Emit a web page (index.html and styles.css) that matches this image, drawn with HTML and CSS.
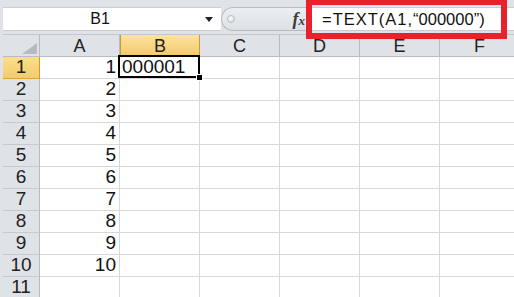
FILE: index.html
```html
<!DOCTYPE html>
<html lang="ja">
<head>
    <meta charset="UTF-8">
    <title>TEXT関数</title>
    <link rel="stylesheet" href="styles.css">
</head>
<body>

    <div class="window">
        <!-- 数式バー -->
        <div class="formula-bar">
            <div class="name-box">
                <span class="cell-ref">B1</span>
                <span class="drop"><span class="drop-arrow"></span></span>
            </div>
            <div class="splitter">
                <span class="knob"></span>
                <span class="fx">f<i>x</i></span>
            </div>
            <div class="formula"><span class="fn">=TEXT(A1,</span><span class="q">“</span>000000<span class="q">”</span><span class="fn">)</span></div>
            <div class="callout"></div>
        </div>

        <!-- シート -->
        <div class="sheet">
            <div class="cell corner">
                <svg width="15" height="11" viewBox="0 0 15 11"><polygon points="15,0 15,11 0,11" fill="#b6bbc1"/></svg>
            </div>
            <div class="cell col-head">A</div>
            <div class="cell col-head selected">B</div>
            <div class="cell col-head">C</div>
            <div class="cell col-head">D</div>
            <div class="cell col-head">E</div>
            <div class="cell col-head">F</div>

            <div class="cell row-head selected">1</div>
            <div class="cell num">1</div>
            <div class="cell active">000001</div>
            <div class="cell"></div><div class="cell"></div><div class="cell"></div><div class="cell"></div>

            <div class="cell row-head">2</div>
            <div class="cell num">2</div>
            <div class="cell"></div><div class="cell"></div><div class="cell"></div><div class="cell"></div><div class="cell"></div>

            <div class="cell row-head">3</div>
            <div class="cell num">3</div>
            <div class="cell"></div><div class="cell"></div><div class="cell"></div><div class="cell"></div><div class="cell"></div>

            <div class="cell row-head">4</div>
            <div class="cell num">4</div>
            <div class="cell"></div><div class="cell"></div><div class="cell"></div><div class="cell"></div><div class="cell"></div>

            <div class="cell row-head">5</div>
            <div class="cell num">5</div>
            <div class="cell"></div><div class="cell"></div><div class="cell"></div><div class="cell"></div><div class="cell"></div>

            <div class="cell row-head">6</div>
            <div class="cell num">6</div>
            <div class="cell"></div><div class="cell"></div><div class="cell"></div><div class="cell"></div><div class="cell"></div>

            <div class="cell row-head">7</div>
            <div class="cell num">7</div>
            <div class="cell"></div><div class="cell"></div><div class="cell"></div><div class="cell"></div><div class="cell"></div>

            <div class="cell row-head">8</div>
            <div class="cell num">8</div>
            <div class="cell"></div><div class="cell"></div><div class="cell"></div><div class="cell"></div><div class="cell"></div>

            <div class="cell row-head">9</div>
            <div class="cell num">9</div>
            <div class="cell"></div><div class="cell"></div><div class="cell"></div><div class="cell"></div><div class="cell"></div>

            <div class="cell row-head">10</div>
            <div class="cell num">10</div>
            <div class="cell"></div><div class="cell"></div><div class="cell"></div><div class="cell"></div><div class="cell"></div>

            <div class="cell row-head">11</div>
            <div class="cell"></div>
            <div class="cell"></div><div class="cell"></div><div class="cell"></div><div class="cell"></div><div class="cell"></div>
        </div>
    </div>

</body>
</html>
```

FILE: styles.css
```css
body {
    margin: 0;
    background: #fff;
    font-family: 'Liberation Sans Narrow', 'Liberation Sans', 'Noto Sans CJK JP', sans-serif;
    color: #111;
    overflow: hidden;
}
.window {
    width: 514px;
    height: 297px;
    overflow: hidden;
    background: #dfe3e8;
    padding-left: 3px;
    box-sizing: border-box;
}

/* 数式バー */
.formula-bar {
    position: relative;
    display: flex;
    height: 35px;
    padding-top: 7px;
    box-sizing: border-box;
    border-bottom: 1px solid #c4c8ce;
}
.name-box {
    display: flex;
    align-items: center;
    width: 218px;
    height: 24px;
    background: #fff;
    border-top: 1px solid #c9cdd3;
    border-bottom: 1px solid #c9cdd3;
    box-sizing: border-box;
}
.cell-ref {
    flex: 1;
    text-align: center;
    font-size: 16px;
}
.drop {
    width: 24px;
    display: flex;
    justify-content: center;
}
.drop-arrow {
    width: 0;
    height: 0;
    border-left: 4px solid transparent;
    border-right: 4px solid transparent;
    border-top: 5px solid #222;
}
.splitter {
    display: flex;
    align-items: center;
    width: 85px;
    height: 24px;
    box-sizing: border-box;
    border: 1px solid #b7bcc2;
    border-right: none;
    border-radius: 12px 0 0 12px;
    background: linear-gradient(#eceef1, #dde0e5);
    padding-left: 5px;
}
.knob {
    width: 6px;
    height: 6px;
    border-radius: 50%;
    border: 1px solid #b9bdc3;
    background: radial-gradient(circle at 40% 35%, #fdfdfd, #cfd3d8);
}
.fx {
    margin-left: auto;
    padding-right: 1px;
    font-family: 'Liberation Serif', serif;
    font-style: italic;
    font-weight: bold;
    font-size: 18px;
    color: #3c3c3c;
}
.fx i {
    font-size: 13px;
}
.formula {
    flex: 1;
    height: 24px;
    margin-left: 3px;
    padding-left: 12px;
    background: #fff;
    border-top: 1px solid #c9cdd3;
    border-bottom: 1px solid #c9cdd3;
    border-left: 1px solid #c9cdd3;
    box-sizing: border-box;
    font-size: 16.5px;
    line-height: 22px;
    white-space: nowrap;
}
.formula .fn {
    letter-spacing: 1px;
}
.callout {
    position: absolute;
    left: 303px;
    top: -1px;
    width: 201px;
    height: 40px;
    box-sizing: border-box;
    border: 6px solid #e8212b;
}

/* シート */
.sheet {
    display: grid;
    grid-template-columns: 37px repeat(6, 80px);
    grid-auto-rows: 22px;
    background: #fff;
}
.cell {
    display: flex;
    align-items: flex-end;
    padding: 0 3px 2px;
    box-sizing: border-box;
    border-right: 1px solid #d8d8d8;
    border-bottom: 1px solid #d8d8d8;
    font-size: 19px;
    line-height: 1;
    white-space: nowrap;
}
.num {
    justify-content: flex-end;
}
.active {
    position: relative;
    padding-left: 2px;
}
.active::before {
    content: '';
    position: absolute;
    left: -2px;
    top: -2px;
    right: -1px;
    bottom: 0;
    border: 2px solid #000;
}
.active::after {
    content: '';
    position: absolute;
    right: -4px;
    bottom: -3px;
    width: 5px;
    height: 5px;
    background: #000;
    border: 1px solid #fff;
}
.corner, .col-head, .row-head {
    background: #dfe3e8;
    border-right: 1px solid #b6bbc1;
    border-bottom: 1px solid #b6bbc1;
    color: #222;
}
.corner {
    align-items: flex-end;
    justify-content: flex-end;
    padding: 0 2px 2px 0;
}
.col-head {
    align-items: center;
    justify-content: center;
    padding: 0;
    font-size: 18px;
}
.row-head {
    justify-content: center;
    border-bottom-color: #c6cad0;
}
.col-head.selected {
    background: linear-gradient(#fbe3a1, #f5c968);
    border-left: 1px solid #c99a3e;
    border-right-color: #c99a3e;
    border-bottom-color: #d9962b;
}
.row-head.selected {
    background: linear-gradient(#fbdd8c, #f6cc6a);
    border-right-color: #d9962b;
    border-bottom-color: #d9a541;
}
```
